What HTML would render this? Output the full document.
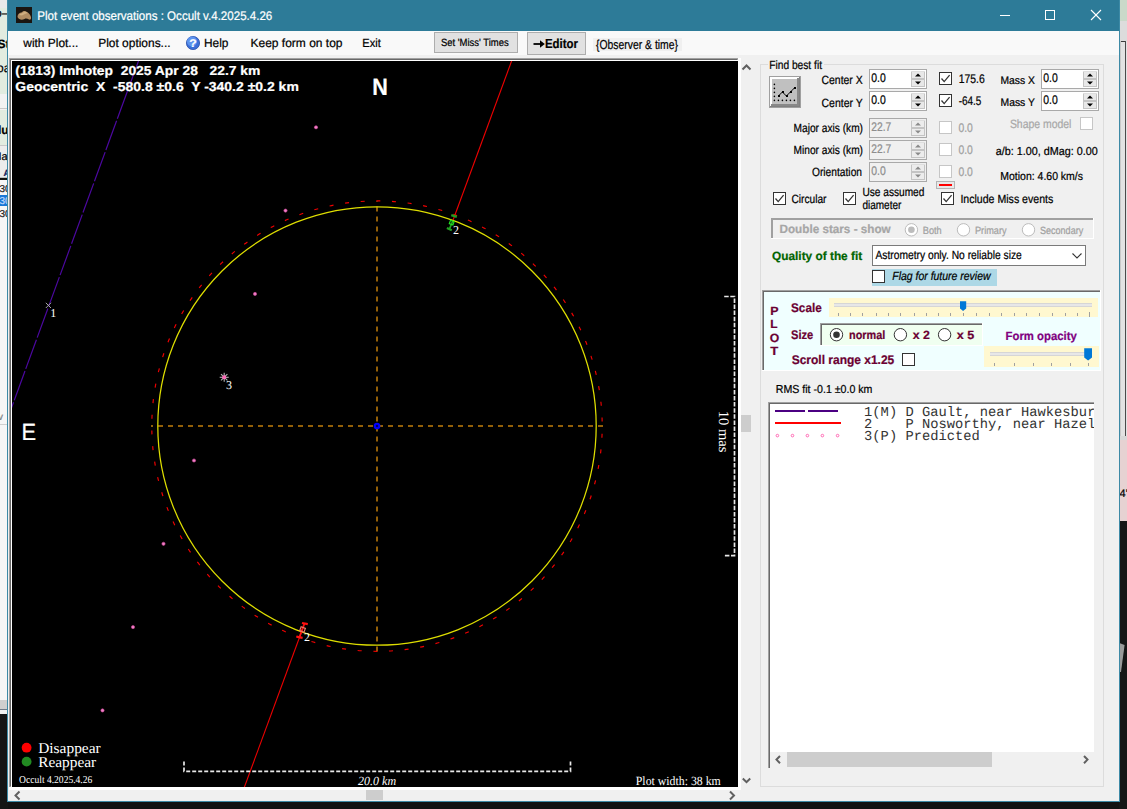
<!DOCTYPE html>
<html><head><meta charset="utf-8"><title>Plot event observations</title>
<style>
html,body{margin:0;padding:0}
body{width:1127px;height:809px;overflow:hidden;position:relative;background:#121212;font-family:"Liberation Sans",sans-serif}
.a{position:absolute}
svg text{text-rendering:geometricPrecision}
</style></head><body>
<div class="a" style="left:0px;top:0px;width:1127px;height:809px;background:#121212;"></div>
<div class="a" style="left:0px;top:0px;width:8px;height:8px;background:#e9e9e9;"></div>
<div class="a" style="left:0px;top:8px;width:8px;height:86px;background:#e2ece0;"></div>
<div class="a" style="left:0px;top:94px;width:8px;height:16px;background:#f2f2f2;"></div>
<div class="a" style="left:0px;top:108px;width:8px;height:1px;background:#c8c8c8;"></div>
<div class="a" style="left:0px;top:110px;width:8px;height:35px;background:#e2ece0;"></div>
<div class="a" style="left:0px;top:145px;width:8px;height:1px;background:#c8c8c8;"></div>
<div class="a" style="left:0px;top:146px;width:8px;height:31px;background:#ececec;"></div>
<div class="a" style="left:0px;top:177px;width:8px;height:1px;background:#c0c0c0;"></div>
<div class="a" style="left:0px;top:180px;width:8px;height:520px;background:#f6f6f6;"></div>
<div class="a" style="left:0px;top:195px;width:8px;height:11px;background:#1a78d6;"></div>
<div class="a" style="left:0px;top:424px;width:8px;height:1px;background:#d0d0d0;"></div>
<div class="a" style="left:0px;top:700px;width:8px;height:12px;background:#cfcfcf;"></div>
<div class="a" style="left:0px;top:709px;width:8px;height:1px;background:#6e7a88;"></div>
<div class="a" style="left:0px;top:710px;width:8px;height:4px;background:#f0f0f0;"></div>
<div class="a" style="left:0px;top:714px;width:8px;height:95px;background:#151515;"></div>
<div class="a" style="left:1119px;top:0px;width:8px;height:21px;background:#c9d9c9;"></div>
<div class="a" style="left:1119px;top:21px;width:8px;height:20px;background:#dcdcdc;"></div>
<div class="a" style="left:1119px;top:41px;width:8px;height:395px;background:#e2e2e2;"></div>
<div class="a" style="left:1120px;top:41px;width:6px;height:1px;background:#3c3c3c;"></div>
<div class="a" style="left:1125px;top:41px;width:1px;height:395px;background:#4a4a4a;"></div>
<div class="a" style="left:1120px;top:41px;width:1px;height:395px;background:#c8c8c8;"></div>
<div class="a" style="left:1119px;top:436px;width:8px;height:4px;background:#d8d8d8;"></div>
<div class="a" style="left:1119px;top:440px;width:8px;height:81px;background:#e6d2d2;"></div>
<div class="a" style="left:1119px;top:521px;width:8px;height:288px;background:#161616;"></div>
<div class="a" style="left:7px;top:0px;width:1113px;height:802px;background:#3d8aa6;"></div>
<div class="a" style="left:8px;top:0px;width:1111px;height:31px;background:#2d7b98;"></div>
<div class="a" style="left:8px;top:31px;width:1111px;height:770px;background:#f0f0f0;"></div>
<div class="a" style="left:8px;top:31px;width:1111px;height:24px;background:#f9f9f9;"></div>
<div class="a" style="left:9px;top:58px;width:732px;height:732px;background:#ffffff;"></div>
<div class="a" style="left:9px;top:58px;width:729px;height:2px;background:#a0a0a0;"></div>
<div class="a" style="left:9px;top:58px;width:2px;height:729px;background:#a0a0a0;"></div>
<div class="a" style="left:10px;top:59px;width:727px;height:1px;background:#696969;"></div>
<div class="a" style="left:10px;top:59px;width:1px;height:727px;background:#696969;"></div>
<div class="a" style="left:12px;top:61px;width:726px;height:726px;background:#000000;"></div>
<div class="a" style="left:741px;top:415px;width:10px;height:17px;background:#cdcdcd;"></div>
<div class="a" style="left:366px;top:790px;width:17px;height:10px;background:#cdcdcd;"></div>
<div class="a" style="left:760px;top:64px;width:344px;height:723px;border:1px solid #dcdcdc;box-sizing:border-box;"></div>
<div class="a" style="left:768px;top:60px;width:56px;height:10px;background:#f0f0f0;"></div>
<div class="a" style="left:16px;top:7px;width:16px;height:16px;background:#1a1510;"></div>
<div class="a" style="left:1000px;top:15px;width:10px;height:1px;background:#ffffff;"></div>
<div class="a" style="left:1045px;top:10px;width:10px;height:10px;border:1px solid #ffffff;box-sizing:border-box;"></div>
<div class="a" style="left:434px;top:32px;width:84px;height:21px;background:#e1e1e1;border:1px solid #adadad;box-sizing:border-box;"></div>
<div class="a" style="left:527px;top:32px;width:59px;height:23px;background:#e1e1e1;border:1px solid #adadad;box-sizing:border-box;"></div>
<div class="a" style="left:593px;top:38px;width:89px;height:13px;background:#f0f0f0;"></div>
<div class="a" style="left:769px;top:76px;width:32px;height:32px;background:#a0a0a0;"></div>
<div class="a" style="left:770px;top:77px;width:30px;height:30px;background:#808080;"></div>
<div class="a" style="left:770px;top:77px;width:29px;height:29px;background:#ffffff;"></div>
<div class="a" style="left:772px;top:79px;width:26px;height:26px;background:#c0c0c0;"></div>
<div class="a" style="left:797px;top:78px;width:2px;height:28px;background:#888888;"></div>
<div class="a" style="left:771px;top:104px;width:28px;height:2px;background:#888888;"></div>
<div class="a" style="left:777.5px;top:95.1px;width:2px;height:2px;background:#000;"></div>
<div class="a" style="left:781.5px;top:91.1px;width:2px;height:2px;background:#000;"></div>
<div class="a" style="left:785.5px;top:95.1px;width:2px;height:2px;background:#000;"></div>
<div class="a" style="left:789.5px;top:91.1px;width:2px;height:2px;background:#000;"></div>
<div class="a" style="left:793.5px;top:87.1px;width:2px;height:2px;background:#000;"></div>
<div class="a" style="left:869px;top:69px;width:58px;height:20px;background:#ffffff;border:1px solid #a9a9a9;box-sizing:border-box;"></div>
<div class="a" style="left:911px;top:71px;width:14px;height:16px;background:#e8e8e8;"></div>
<div class="a" style="left:911px;top:71px;width:1px;height:16px;background:#c4c4c4;"></div>
<div class="a" style="left:924px;top:71px;width:1px;height:16px;background:#c4c4c4;"></div>
<div class="a" style="left:911px;top:86px;width:14px;height:1px;background:#c4c4c4;"></div>
<div class="a" style="left:911px;top:71px;width:14px;height:1px;background:#dedede;"></div>
<div class="a" style="left:911px;top:78px;width:14px;height:2px;background:#c4c4c4;"></div>
<div class="a" style="left:869px;top:91px;width:58px;height:20px;background:#ffffff;border:1px solid #a9a9a9;box-sizing:border-box;"></div>
<div class="a" style="left:911px;top:93px;width:14px;height:16px;background:#e8e8e8;"></div>
<div class="a" style="left:911px;top:93px;width:1px;height:16px;background:#c4c4c4;"></div>
<div class="a" style="left:924px;top:93px;width:1px;height:16px;background:#c4c4c4;"></div>
<div class="a" style="left:911px;top:108px;width:14px;height:1px;background:#c4c4c4;"></div>
<div class="a" style="left:911px;top:93px;width:14px;height:1px;background:#dedede;"></div>
<div class="a" style="left:911px;top:100px;width:14px;height:2px;background:#c4c4c4;"></div>
<div class="a" style="left:939px;top:72px;width:13px;height:13px;background:#ffffff;border:1px solid #333333;box-sizing:border-box;"></div>
<div class="a" style="left:939px;top:94px;width:13px;height:13px;background:#ffffff;border:1px solid #333333;box-sizing:border-box;"></div>
<div class="a" style="left:1041px;top:69px;width:58px;height:20px;background:#ffffff;border:1px solid #a9a9a9;box-sizing:border-box;"></div>
<div class="a" style="left:1083px;top:71px;width:14px;height:16px;background:#e8e8e8;"></div>
<div class="a" style="left:1083px;top:71px;width:1px;height:16px;background:#c4c4c4;"></div>
<div class="a" style="left:1096px;top:71px;width:1px;height:16px;background:#c4c4c4;"></div>
<div class="a" style="left:1083px;top:86px;width:14px;height:1px;background:#c4c4c4;"></div>
<div class="a" style="left:1083px;top:71px;width:14px;height:1px;background:#dedede;"></div>
<div class="a" style="left:1083px;top:78px;width:14px;height:2px;background:#c4c4c4;"></div>
<div class="a" style="left:1041px;top:91px;width:58px;height:20px;background:#ffffff;border:1px solid #a9a9a9;box-sizing:border-box;"></div>
<div class="a" style="left:1083px;top:93px;width:14px;height:16px;background:#e8e8e8;"></div>
<div class="a" style="left:1083px;top:93px;width:1px;height:16px;background:#c4c4c4;"></div>
<div class="a" style="left:1096px;top:93px;width:1px;height:16px;background:#c4c4c4;"></div>
<div class="a" style="left:1083px;top:108px;width:14px;height:1px;background:#c4c4c4;"></div>
<div class="a" style="left:1083px;top:93px;width:14px;height:1px;background:#dedede;"></div>
<div class="a" style="left:1083px;top:100px;width:14px;height:2px;background:#c4c4c4;"></div>
<div class="a" style="left:869px;top:118px;width:58px;height:20px;background:#f0f0f0;border:1px solid #a9a9a9;box-sizing:border-box;"></div>
<div class="a" style="left:911px;top:120px;width:14px;height:16px;background:#ececec;"></div>
<div class="a" style="left:911px;top:120px;width:1px;height:16px;background:#c4c4c4;"></div>
<div class="a" style="left:924px;top:120px;width:1px;height:16px;background:#c4c4c4;"></div>
<div class="a" style="left:911px;top:135px;width:14px;height:1px;background:#c4c4c4;"></div>
<div class="a" style="left:911px;top:120px;width:14px;height:1px;background:#dedede;"></div>
<div class="a" style="left:911px;top:127px;width:14px;height:2px;background:#c4c4c4;"></div>
<div class="a" style="left:869px;top:140px;width:58px;height:20px;background:#f0f0f0;border:1px solid #a9a9a9;box-sizing:border-box;"></div>
<div class="a" style="left:911px;top:142px;width:14px;height:16px;background:#ececec;"></div>
<div class="a" style="left:911px;top:142px;width:1px;height:16px;background:#c4c4c4;"></div>
<div class="a" style="left:924px;top:142px;width:1px;height:16px;background:#c4c4c4;"></div>
<div class="a" style="left:911px;top:157px;width:14px;height:1px;background:#c4c4c4;"></div>
<div class="a" style="left:911px;top:142px;width:14px;height:1px;background:#dedede;"></div>
<div class="a" style="left:911px;top:149px;width:14px;height:2px;background:#c4c4c4;"></div>
<div class="a" style="left:869px;top:162px;width:58px;height:20px;background:#f0f0f0;border:1px solid #a9a9a9;box-sizing:border-box;"></div>
<div class="a" style="left:911px;top:164px;width:14px;height:16px;background:#ececec;"></div>
<div class="a" style="left:911px;top:164px;width:1px;height:16px;background:#c4c4c4;"></div>
<div class="a" style="left:924px;top:164px;width:1px;height:16px;background:#c4c4c4;"></div>
<div class="a" style="left:911px;top:179px;width:14px;height:1px;background:#c4c4c4;"></div>
<div class="a" style="left:911px;top:164px;width:14px;height:1px;background:#dedede;"></div>
<div class="a" style="left:911px;top:171px;width:14px;height:2px;background:#c4c4c4;"></div>
<div class="a" style="left:939px;top:121px;width:13px;height:13px;background:#ffffff;border:1px solid #c6c6c6;box-sizing:border-box;"></div>
<div class="a" style="left:939px;top:143px;width:13px;height:13px;background:#ffffff;border:1px solid #c6c6c6;box-sizing:border-box;"></div>
<div class="a" style="left:939px;top:165px;width:13px;height:13px;background:#ffffff;border:1px solid #c6c6c6;box-sizing:border-box;"></div>
<div class="a" style="left:936px;top:181px;width:19px;height:8px;background:#e8e8e8;border:1px solid #b4b4b4;box-sizing:border-box;"></div>
<div class="a" style="left:939px;top:184px;width:13px;height:2px;background:#ff0000;"></div>
<div class="a" style="left:1080px;top:117px;width:13px;height:13px;background:#ffffff;border:1px solid #c6c6c6;box-sizing:border-box;"></div>
<div class="a" style="left:773px;top:192px;width:13px;height:13px;background:#ffffff;border:1px solid #333333;box-sizing:border-box;"></div>
<div class="a" style="left:843px;top:192px;width:13px;height:13px;background:#ffffff;border:1px solid #333333;box-sizing:border-box;"></div>
<div class="a" style="left:941px;top:192px;width:13px;height:13px;background:#ffffff;border:1px solid #333333;box-sizing:border-box;"></div>
<div class="a" style="left:771px;top:218px;width:323px;height:21px;background:#f0f0f0;"></div>
<div class="a" style="left:771px;top:218px;width:323px;height:2px;background:#a0a0a0;"></div>
<div class="a" style="left:771px;top:218px;width:2px;height:21px;background:#a0a0a0;"></div>
<div class="a" style="left:771px;top:238px;width:323px;height:1px;background:#ffffff;"></div>
<div class="a" style="left:1093px;top:218px;width:1px;height:21px;background:#ffffff;"></div>
<div class="a" style="left:872px;top:245px;width:214px;height:21px;background:#ffffff;border:1px solid #7a7a7a;box-sizing:border-box;"></div>
<div class="a" style="left:872px;top:269px;width:125px;height:17px;background:#add8e6;"></div>
<div class="a" style="left:872px;top:270px;width:13px;height:13px;background:#ffffff;border:1px solid #333333;box-sizing:border-box;"></div>
<div class="a" style="left:762px;top:290px;width:339px;height:81px;background:#f0ffff;"></div>
<div class="a" style="left:762px;top:290px;width:339px;height:2px;background:#a0a0a0;"></div>
<div class="a" style="left:762px;top:290px;width:2px;height:81px;background:#a0a0a0;"></div>
<div class="a" style="left:763px;top:291px;width:337px;height:1px;background:#696969;"></div>
<div class="a" style="left:763px;top:291px;width:1px;height:79px;background:#696969;"></div>
<div class="a" style="left:762px;top:370px;width:339px;height:1px;background:#ffffff;"></div>
<div class="a" style="left:1100px;top:290px;width:1px;height:81px;background:#ffffff;"></div>
<div class="a" style="left:829px;top:298px;width:269px;height:19px;background:#fff8d0;"></div>
<div class="a" style="left:834px;top:303px;width:258px;height:4px;background:#e7e7e7;"></div>
<div class="a" style="left:834px;top:303px;width:258px;height:1px;background:#d6d6d6;"></div>
<div class="a" style="left:834px;top:306px;width:258px;height:1px;background:#d6d6d6;"></div>
<div class="a" style="left:838px;top:313px;width:1px;height:3px;background:#a0a0a0;"></div>
<div class="a" style="left:850px;top:313px;width:1px;height:3px;background:#a0a0a0;"></div>
<div class="a" style="left:862px;top:313px;width:1px;height:3px;background:#a0a0a0;"></div>
<div class="a" style="left:876px;top:313px;width:1px;height:3px;background:#a0a0a0;"></div>
<div class="a" style="left:888px;top:313px;width:1px;height:3px;background:#a0a0a0;"></div>
<div class="a" style="left:900px;top:313px;width:1px;height:3px;background:#a0a0a0;"></div>
<div class="a" style="left:914px;top:313px;width:1px;height:3px;background:#a0a0a0;"></div>
<div class="a" style="left:926px;top:313px;width:1px;height:3px;background:#a0a0a0;"></div>
<div class="a" style="left:938px;top:313px;width:1px;height:3px;background:#a0a0a0;"></div>
<div class="a" style="left:950px;top:313px;width:1px;height:3px;background:#a0a0a0;"></div>
<div class="a" style="left:963px;top:313px;width:1px;height:3px;background:#a0a0a0;"></div>
<div class="a" style="left:976px;top:313px;width:1px;height:3px;background:#a0a0a0;"></div>
<div class="a" style="left:989px;top:313px;width:1px;height:3px;background:#a0a0a0;"></div>
<div class="a" style="left:1001px;top:313px;width:1px;height:3px;background:#a0a0a0;"></div>
<div class="a" style="left:1014px;top:313px;width:1px;height:3px;background:#a0a0a0;"></div>
<div class="a" style="left:1026px;top:313px;width:1px;height:3px;background:#a0a0a0;"></div>
<div class="a" style="left:1039px;top:313px;width:1px;height:3px;background:#a0a0a0;"></div>
<div class="a" style="left:1052px;top:313px;width:1px;height:3px;background:#a0a0a0;"></div>
<div class="a" style="left:1065px;top:313px;width:1px;height:3px;background:#a0a0a0;"></div>
<div class="a" style="left:1077px;top:313px;width:1px;height:3px;background:#a0a0a0;"></div>
<div class="a" style="left:1089px;top:313px;width:1px;height:3px;background:#a0a0a0;"></div>
<div class="a" style="left:1089px;top:312px;width:1px;height:5px;background:#a0a0a0;"></div>
<div class="a" style="left:820px;top:323px;width:163px;height:23px;background:#f0fff0;"></div>
<div class="a" style="left:820px;top:323px;width:163px;height:2px;background:#a0a0a0;"></div>
<div class="a" style="left:820px;top:323px;width:2px;height:23px;background:#a0a0a0;"></div>
<div class="a" style="left:821px;top:324px;width:161px;height:1px;background:#696969;"></div>
<div class="a" style="left:821px;top:324px;width:1px;height:21px;background:#696969;"></div>
<div class="a" style="left:820px;top:345px;width:163px;height:1px;background:#ffffff;"></div>
<div class="a" style="left:982px;top:323px;width:1px;height:23px;background:#ffffff;"></div>
<div class="a" style="left:984px;top:346px;width:115px;height:21px;background:#fff8d0;"></div>
<div class="a" style="left:990px;top:352px;width:102px;height:4px;background:#e7e7e7;"></div>
<div class="a" style="left:990px;top:352px;width:102px;height:1px;background:#d6d6d6;"></div>
<div class="a" style="left:990px;top:355px;width:102px;height:1px;background:#d6d6d6;"></div>
<div class="a" style="left:994px;top:363px;width:1px;height:3px;background:#a0a0a0;"></div>
<div class="a" style="left:1014px;top:363px;width:1px;height:3px;background:#a0a0a0;"></div>
<div class="a" style="left:1033px;top:363px;width:1px;height:3px;background:#a0a0a0;"></div>
<div class="a" style="left:1051px;top:363px;width:1px;height:3px;background:#a0a0a0;"></div>
<div class="a" style="left:1070px;top:363px;width:1px;height:3px;background:#a0a0a0;"></div>
<div class="a" style="left:1088px;top:363px;width:1px;height:3px;background:#a0a0a0;"></div>
<div class="a" style="left:902px;top:353px;width:13px;height:13px;background:#ffffff;border:1px solid #333333;box-sizing:border-box;"></div>
<div class="a" style="left:768px;top:402px;width:327px;height:367px;background:#ffffff;"></div>
<div class="a" style="left:768px;top:402px;width:327px;height:2px;background:#a0a0a0;"></div>
<div class="a" style="left:768px;top:402px;width:2px;height:367px;background:#a0a0a0;"></div>
<div class="a" style="left:769px;top:403px;width:325px;height:1px;background:#696969;"></div>
<div class="a" style="left:769px;top:403px;width:1px;height:365px;background:#696969;"></div>
<div class="a" style="left:1094px;top:402px;width:1px;height:367px;background:#f0f0f0;"></div>
<div class="a" style="left:768px;top:768px;width:327px;height:1px;background:#f0f0f0;"></div>
<div class="a" style="left:770px;top:752px;width:324px;height:16px;background:#f0f0f0;"></div>
<div class="a" style="left:787px;top:752px;width:205px;height:15px;background:#cdcdcd;"></div>
<div class="a" style="left:775px;top:410px;width:30px;height:2px;background:#4b0082;"></div>
<div class="a" style="left:808px;top:410px;width:30px;height:2px;background:#4b0082;"></div>
<div class="a" style="left:775px;top:422px;width:66px;height:2px;background:#ff0000;"></div>
<svg class="a" style="left:0;top:0" width="1127" height="809">
<path d="M17.5,17 C17.5,14 19.5,12.8 21.5,12.6 C22.5,11 24.5,10.4 26,11.4 C28,12 30.2,14 31,17 C31.3,19 30.5,20.2 29,19.6 C27.5,18.6 26,18.2 24.5,18.9 C22.5,20.2 19,20.2 17.5,17 Z" fill="#b08c62"/><path d="M19,15 C20,13.5 22,13.2 23.5,12.2 C25,11.5 26.5,12 27.5,13 C26,13.5 24,14.5 22,15.5 Z" fill="#cfae80"/>
<text x="37.3" y="20" textLength="235" lengthAdjust="spacingAndGlyphs" style="font-family:'Liberation Sans';font-size:12.5px;font-weight:normal;font-style:normal;fill:#ffffff;stroke:#ffffff;stroke-width:0.22px;white-space:pre" >Plot event observations : Occult v.4.2025.4.26</text>
<line x1="1091" y1="10" x2="1101" y2="20" stroke="#ffffff" stroke-width="1.1" />
<line x1="1101" y1="10" x2="1091" y2="20" stroke="#ffffff" stroke-width="1.1" />
<text x="23.3" y="47" textLength="55" lengthAdjust="spacingAndGlyphs" style="font-family:'Liberation Sans';font-size:12px;font-weight:normal;font-style:normal;fill:#000;stroke:#000;stroke-width:0.22px;white-space:pre" >with Plot...</text>
<text x="98.2" y="47" textLength="72.4" lengthAdjust="spacingAndGlyphs" style="font-family:'Liberation Sans';font-size:12px;font-weight:normal;font-style:normal;fill:#000;stroke:#000;stroke-width:0.22px;white-space:pre" >Plot options...</text>
<circle cx="193" cy="43" r="6.6" fill="#3a6fd8" stroke="#2a4fa8" stroke-width="0.8"/>
<circle cx="192" cy="41.5" r="5" fill="#5d93ee"/>
<text x="189.3" y="47.3" textLength="7.5" lengthAdjust="spacingAndGlyphs" style="font-family:'Liberation Sans';font-size:11px;font-weight:bold;font-style:normal;fill:#ffffff;stroke:#ffffff;stroke-width:0.22px;white-space:pre" >?</text>
<text x="204" y="47" textLength="24.4" lengthAdjust="spacingAndGlyphs" style="font-family:'Liberation Sans';font-size:12px;font-weight:normal;font-style:normal;fill:#000;stroke:#000;stroke-width:0.22px;white-space:pre" >Help</text>
<text x="250.5" y="47" textLength="92" lengthAdjust="spacingAndGlyphs" style="font-family:'Liberation Sans';font-size:12px;font-weight:normal;font-style:normal;fill:#000;stroke:#000;stroke-width:0.22px;white-space:pre" >Keep form on top</text>
<text x="362.3" y="47" textLength="18.5" lengthAdjust="spacingAndGlyphs" style="font-family:'Liberation Sans';font-size:12px;font-weight:normal;font-style:normal;fill:#000;stroke:#000;stroke-width:0.22px;white-space:pre" >Exit</text>
<text x="440.9" y="46.3" textLength="67.8" lengthAdjust="spacingAndGlyphs" style="font-family:'Liberation Sans';font-size:10.5px;font-weight:normal;font-style:normal;fill:#000;stroke:#000;stroke-width:0.22px;white-space:pre" >Set &#x27;Miss&#x27; Times</text>
<path d="M533.5,44 H543" stroke="#000" stroke-width="1.8"/><path d="M540,40.3 L544.8,44 L540,47.7 Z" fill="#000"/>
<text x="545" y="48" textLength="33" lengthAdjust="spacingAndGlyphs" style="font-family:'Liberation Sans';font-size:13px;font-weight:bold;font-style:normal;fill:#000;stroke:#000;stroke-width:0.22px;white-space:pre" >Editor</text>
<text x="596" y="49" textLength="82" lengthAdjust="spacingAndGlyphs" style="font-family:'Liberation Sans';font-size:13px;font-weight:normal;font-style:normal;fill:#000;stroke:#000;stroke-width:0.22px;white-space:pre" >{Observer &amp; time}</text>
<defs><clipPath id="lclip"><rect x="0" y="0" width="7" height="809"/></clipPath><clipPath id="rclip"><rect x="1120" y="0" width="7" height="809"/></clipPath></defs>
<g clip-path="url(#lclip)">
<text x="-5" y="17" style="font-family:'Liberation Sans';font-size:12px;font-weight:normal;font-style:normal;fill:#000;stroke:#000;stroke-width:0.22px;white-space:pre" >o–</text>
<text x="-2.5" y="47.5" style="font-family:'Liberation Sans';font-size:12px;font-weight:bold;font-style:normal;fill:#000;stroke:#000;stroke-width:0.22px;white-space:pre" >St</text>
<text x="-3" y="71.5" style="font-family:'Liberation Sans';font-size:12px;font-weight:normal;font-style:normal;fill:#000;stroke:#000;stroke-width:0.22px;white-space:pre" >oa</text>
<text x="-2" y="134" style="font-family:'Liberation Sans';font-size:12px;font-weight:bold;font-style:normal;fill:#000;stroke:#000;stroke-width:0.22px;white-space:pre" >lu</text>
<text x="-7.7" y="160" style="font-family:'Liberation Sans';font-size:11px;font-weight:normal;font-style:normal;fill:#000;stroke:#000;stroke-width:0.22px;white-space:pre" >Ma</text>
<text x="3.5" y="176" style="font-family:'Liberation Sans';font-size:9px;font-weight:bold;font-style:normal;fill:#102060;stroke:#102060;stroke-width:0.22px;white-space:pre" >A</text>
<text x="-0.5" y="191.7" style="font-family:'Liberation Sans';font-size:10px;font-weight:normal;font-style:normal;fill:#202020;stroke:#202020;stroke-width:0.22px;white-space:pre" >30</text>
<text x="-0.5" y="204" style="font-family:'Liberation Sans';font-size:10px;font-weight:normal;font-style:normal;fill:#c0d8ff;stroke:#c0d8ff;stroke-width:0.22px;white-space:pre" >30</text>
<text x="-0.5" y="216.7" style="font-family:'Liberation Sans';font-size:10px;font-weight:normal;font-style:normal;fill:#202020;stroke:#202020;stroke-width:0.22px;white-space:pre" >30</text>
<text x="-2" y="420" style="font-family:'Liberation Sans';font-size:10px;font-weight:normal;font-style:normal;fill:#808080;stroke:#808080;stroke-width:0.22px;white-space:pre" >v</text>
</g>
<g clip-path="url(#rclip)">
<text x="1119.5" y="497" style="font-family:'Liberation Sans';font-size:11px;font-weight:normal;font-style:normal;fill:#000;stroke:#000;stroke-width:0.22px;white-space:pre" >4’</text>
<path d="M1119.5,643 L1124.6,645 L1121,672 L1119.5,672 Z" fill="#9a9a9a"/>
</g>
<g clip-path="url(#plotclip)">
<defs><clipPath id="plotclip"><rect x="12" y="61" width="726" height="726"/></clipPath></defs>
<line x1="138.5" y1="61" x2="7.03" y2="420" stroke="#4c08a0" stroke-width="1.2" stroke-dasharray="31.1 2.2" stroke-dashoffset="2.9"/>
<line x1="513.808" y1="55" x2="452.72" y2="221" stroke="#ee0000" stroke-width="1.1" />
<line x1="302.944" y1="628" x2="243.32800000000003" y2="790" stroke="#ee0000" stroke-width="1.1" />
<line x1="151" y1="426" x2="603" y2="426" stroke="#925f08" stroke-width="2" stroke-dasharray="5 5" stroke-dashoffset="-7"/>
<line x1="377" y1="201" x2="377" y2="652" stroke="#925f08" stroke-width="2" stroke-dasharray="5 5" stroke-dashoffset="-5.6"/>
<circle cx="377" cy="426.1" r="225.2" fill="none" stroke="#f00000" stroke-width="1.15" stroke-dasharray="4 11.708" stroke-dashoffset="-7.7"/>
<circle cx="377" cy="426" r="219.2" fill="none" stroke="#dede00" stroke-width="1.25"/>
<circle cx="377" cy="426" r="2.3" fill="#000060" stroke="#0000ff" stroke-width="2.1"/>
<circle cx="316.0" cy="127.3" r="1.6" fill="#f080c8" stroke="#d04898" stroke-width="0.6"/>
<circle cx="285.5" cy="210.6" r="1.6" fill="#f080c8" stroke="#d04898" stroke-width="0.6"/>
<circle cx="255.0" cy="293.9" r="1.6" fill="#f080c8" stroke="#d04898" stroke-width="0.6"/>
<circle cx="194.0" cy="460.5" r="1.6" fill="#f080c8" stroke="#d04898" stroke-width="0.6"/>
<circle cx="163.5" cy="543.8" r="1.6" fill="#f080c8" stroke="#d04898" stroke-width="0.6"/>
<circle cx="133.0" cy="627.1" r="1.6" fill="#f080c8" stroke="#d04898" stroke-width="0.6"/>
<circle cx="102.5" cy="710.4" r="1.6" fill="#f080c8" stroke="#d04898" stroke-width="0.6"/>
<line x1="219.7" y1="377.3" x2="228.7" y2="377.3" stroke="#b4b4b4" stroke-width="1.1" />
<line x1="221.01801948466053" y1="374.1180194846605" x2="227.38198051533945" y2="380.4819805153395" stroke="#b4b4b4" stroke-width="1.1" />
<line x1="224.2" y1="372.8" x2="224.2" y2="381.8" stroke="#b4b4b4" stroke-width="1.1" />
<line x1="227.38198051533945" y1="374.1180194846605" x2="221.01801948466053" y2="380.4819805153395" stroke="#b4b4b4" stroke-width="1.1" />
<circle cx="224.2" cy="377.3" r="2" fill="#ff6ab8"/>
<line x1="45.8" y1="302.79999999999995" x2="51.0" y2="308.0" stroke="#a8a8a8" stroke-width="1" />
<line x1="45.8" y1="308.0" x2="51.0" y2="302.79999999999995" stroke="#a8a8a8" stroke-width="1" />
<line x1="451.3" y1="215.1" x2="456.8" y2="216.9" stroke="#22a022" stroke-width="2.2" />
<line x1="446.9" y1="228" x2="451.8" y2="230.2" stroke="#22a022" stroke-width="2.2" />
<line x1="452.8" y1="221" x2="449.4" y2="229" stroke="#22a022" stroke-width="1.8" />
<rect x="449.8" y="220.8" width="3.8" height="3.6" fill="none" stroke="#20e020" stroke-width="1.2" transform="rotate(20 451.7 222.6)"/>
<line x1="302" y1="623" x2="307.8" y2="624.2" stroke="#ff1010" stroke-width="2.2" />
<line x1="296.4" y1="636.6" x2="302.6" y2="637.8" stroke="#ff1010" stroke-width="2.2" />
<line x1="304.5" y1="623.5" x2="299.5" y2="637" stroke="#ff1010" stroke-width="1.8" />
<rect x="300.3" y="627.4" width="4.5" height="4.2" fill="none" stroke="#f07868" stroke-width="1.2" transform="rotate(20 302.5 629.5)"/>
</g>
<path d="M184,761.5 V771.3 H570.5 V761.5" fill="none" stroke="#e8e8e8" stroke-width="1.7" stroke-dasharray="4 2"/>
<path d="M724.2,296.5 H734.5 V555.6 H724.2" fill="none" stroke="#e8e8e8" stroke-width="1.7" stroke-dasharray="4.5 1.6"/>
<text x="15.3" y="74.5" textLength="245" lengthAdjust="spacingAndGlyphs" style="font-family:'Liberation Sans';font-size:13px;font-weight:bold;font-style:normal;fill:#ffffff;stroke:#ffffff;stroke-width:0.22px;white-space:pre" >(1813) Imhotep  2025 Apr 28   22.7 km</text>
<text x="15.3" y="90.6" textLength="283.5" lengthAdjust="spacingAndGlyphs" style="font-family:'Liberation Sans';font-size:13px;font-weight:bold;font-style:normal;fill:#ffffff;stroke:#ffffff;stroke-width:0.22px;white-space:pre" >Geocentric  X  -580.8 ±0.6  Y -340.2 ±0.2 km</text>
<text x="372.3" y="95" textLength="15.6" lengthAdjust="spacingAndGlyphs" style="font-family:'Liberation Sans';font-size:23.5px;font-weight:bold;font-style:normal;fill:#ffffff;stroke:#ffffff;stroke-width:0.22px;white-space:pre" >N</text>
<text x="21.4" y="440" textLength="14.6" lengthAdjust="spacingAndGlyphs" style="font-family:'Liberation Sans';font-size:23.5px;font-weight:normal;font-style:normal;fill:#ffffff;stroke:#ffffff;stroke-width:0.22px;white-space:pre" >E</text>
<text x="50.2" y="317" style="font-family:'Liberation Serif';font-size:12px;font-weight:normal;font-style:normal;fill:#ffffff;white-space:pre" >1</text>
<text x="453" y="233.7" style="font-family:'Liberation Serif';font-size:12px;font-weight:normal;font-style:normal;fill:#ffffff;white-space:pre" >2</text>
<text x="304" y="641" style="font-family:'Liberation Serif';font-size:12px;font-weight:normal;font-style:normal;fill:#ffffff;white-space:pre" >2</text>
<text x="226" y="389" style="font-family:'Liberation Serif';font-size:12px;font-weight:normal;font-style:normal;fill:#ffffff;white-space:pre" >3</text>
<circle cx="26.6" cy="747.7" r="4.9" fill="#ff0000"/>
<circle cx="26.6" cy="761.6" r="4.9" fill="#228b22"/>
<text x="38.2" y="752.7" textLength="62.5" lengthAdjust="spacingAndGlyphs" style="font-family:'Liberation Serif';font-size:15px;font-weight:normal;font-style:normal;fill:#ffffff;white-space:pre" >Disappear</text>
<text x="38.2" y="766.7" textLength="58" lengthAdjust="spacingAndGlyphs" style="font-family:'Liberation Serif';font-size:15px;font-weight:normal;font-style:normal;fill:#ffffff;white-space:pre" >Reappear</text>
<text x="19.1" y="783" textLength="73.2" lengthAdjust="spacingAndGlyphs" style="font-family:'Liberation Serif';font-size:10.5px;font-weight:normal;font-style:normal;fill:#ffffff;white-space:pre" >Occult 4.2025.4.26</text>
<text x="358.1" y="785" textLength="38" lengthAdjust="spacingAndGlyphs" style="font-family:'Liberation Serif';font-size:12.5px;font-weight:normal;font-style:italic;fill:#ffffff;white-space:pre" >20.0 km</text>
<text x="635.8" y="785" textLength="85" lengthAdjust="spacingAndGlyphs" style="font-family:'Liberation Serif';font-size:12.5px;font-weight:normal;font-style:normal;fill:#ffffff;white-space:pre" >Plot width: 38 km</text>
<g transform="translate(718.5,410.8) rotate(90)">
<text x="0" y="0" textLength="41.5" lengthAdjust="spacingAndGlyphs" style="font-family:'Liberation Serif';font-size:14.5px;font-weight:normal;font-style:normal;fill:#ffffff;white-space:pre" >10 mas</text>
</g>
<path d="M742.5,69.5 L746.5,65.5 L750.5,69.5" fill="none" stroke="#606060" stroke-width="2"/>
<path d="M742.8,778.5 L746.5,782.2 L750.2,778.5" fill="none" stroke="#606060" stroke-width="2"/>
<path d="M19.5,791.5 L15.5,795.5 L19.5,799.5" fill="none" stroke="#606060" stroke-width="2"/>
<path d="M730,791.5 L734,795.5 L730,799.5" fill="none" stroke="#606060" stroke-width="2"/>
<text x="769.2" y="69.2" textLength="52.8" lengthAdjust="spacingAndGlyphs" style="font-family:'Liberation Sans';font-size:12px;font-weight:normal;font-style:normal;fill:#000;stroke:#000;stroke-width:0.22px;white-space:pre" >Find best fit</text>
<circle cx="774.4" cy="84.4" r="0.8" fill="#000"/>
<circle cx="774.4" cy="88.4" r="0.8" fill="#000"/>
<circle cx="774.4" cy="92.4" r="0.8" fill="#000"/>
<circle cx="774.4" cy="96.4" r="0.8" fill="#000"/>
<circle cx="774.4" cy="100.4" r="0.8" fill="#000"/>
<circle cx="778.4" cy="100.4" r="0.8" fill="#000"/>
<circle cx="782.4" cy="100.4" r="0.8" fill="#000"/>
<circle cx="786.4" cy="100.4" r="0.8" fill="#000"/>
<circle cx="790.4" cy="100.4" r="0.8" fill="#000"/>
<circle cx="794.4" cy="100.4" r="0.8" fill="#000"/>
<polyline points="778.4,96 782.4,92 786.4,96 790.4,92 794.4,88" fill="none" stroke="#000" stroke-width="1"/>
<text x="821.5" y="84.3" textLength="41.2" lengthAdjust="spacingAndGlyphs" style="font-family:'Liberation Sans';font-size:12px;font-weight:normal;font-style:normal;fill:#000;stroke:#000;stroke-width:0.22px;white-space:pre" >Center X</text>
<text x="821.5" y="106.5" textLength="41.2" lengthAdjust="spacingAndGlyphs" style="font-family:'Liberation Sans';font-size:12px;font-weight:normal;font-style:normal;fill:#000;stroke:#000;stroke-width:0.22px;white-space:pre" >Center Y</text>
<path d="M915,76.4 L918,73.4 L921,76.4 Z" fill="#000"/>
<path d="M915,81.4 L918,84.4 L921,81.4 Z" fill="#000"/>
<text x="871.3" y="82" textLength="14.5" lengthAdjust="spacingAndGlyphs" style="font-family:'Liberation Sans';font-size:12.5px;font-weight:normal;font-style:normal;fill:#000;stroke:#000;stroke-width:0.22px;white-space:pre" >0.0</text>
<path d="M915,98.4 L918,95.4 L921,98.4 Z" fill="#000"/>
<path d="M915,103.4 L918,106.4 L921,103.4 Z" fill="#000"/>
<text x="871.3" y="104.3" textLength="14.5" lengthAdjust="spacingAndGlyphs" style="font-family:'Liberation Sans';font-size:12.5px;font-weight:normal;font-style:normal;fill:#000;stroke:#000;stroke-width:0.22px;white-space:pre" >0.0</text>
<path d="M941.5,78.5 L944.2,81.6 L949.6,75.2" fill="none" stroke="#333" stroke-width="1.3"/>
<path d="M941.5,100.5 L944.2,103.6 L949.6,97.2" fill="none" stroke="#333" stroke-width="1.3"/>
<text x="958.7" y="82.8" textLength="26.1" lengthAdjust="spacingAndGlyphs" style="font-family:'Liberation Sans';font-size:12.5px;font-weight:normal;font-style:normal;fill:#000;stroke:#000;stroke-width:0.22px;white-space:pre" >175.6</text>
<text x="958.7" y="105" textLength="22.7" lengthAdjust="spacingAndGlyphs" style="font-family:'Liberation Sans';font-size:12.5px;font-weight:normal;font-style:normal;fill:#000;stroke:#000;stroke-width:0.22px;white-space:pre" >-64.5</text>
<text x="1000.5" y="84" textLength="34.4" lengthAdjust="spacingAndGlyphs" style="font-family:'Liberation Sans';font-size:11px;font-weight:normal;font-style:normal;fill:#000;stroke:#000;stroke-width:0.22px;white-space:pre" >Mass X</text>
<text x="1000.5" y="106" textLength="34.4" lengthAdjust="spacingAndGlyphs" style="font-family:'Liberation Sans';font-size:11px;font-weight:normal;font-style:normal;fill:#000;stroke:#000;stroke-width:0.22px;white-space:pre" >Mass Y</text>
<path d="M1087,76.4 L1090,73.4 L1093,76.4 Z" fill="#000"/>
<path d="M1087,81.4 L1090,84.4 L1093,81.4 Z" fill="#000"/>
<text x="1043.3" y="82.3" textLength="14.5" lengthAdjust="spacingAndGlyphs" style="font-family:'Liberation Sans';font-size:12.5px;font-weight:normal;font-style:normal;fill:#000;stroke:#000;stroke-width:0.22px;white-space:pre" >0.0</text>
<path d="M1087,98.4 L1090,95.4 L1093,98.4 Z" fill="#000"/>
<path d="M1087,103.4 L1090,106.4 L1093,103.4 Z" fill="#000"/>
<text x="1043.3" y="104.3" textLength="14.5" lengthAdjust="spacingAndGlyphs" style="font-family:'Liberation Sans';font-size:12.5px;font-weight:normal;font-style:normal;fill:#000;stroke:#000;stroke-width:0.22px;white-space:pre" >0.0</text>
<text x="793.5" y="132.3" textLength="69.5" lengthAdjust="spacingAndGlyphs" style="font-family:'Liberation Sans';font-size:12px;font-weight:normal;font-style:normal;fill:#000;stroke:#000;stroke-width:0.22px;white-space:pre" >Major axis (km)</text>
<text x="793.5" y="154.3" textLength="69.5" lengthAdjust="spacingAndGlyphs" style="font-family:'Liberation Sans';font-size:12px;font-weight:normal;font-style:normal;fill:#000;stroke:#000;stroke-width:0.22px;white-space:pre" >Minor axis (km)</text>
<text x="812" y="176.3" textLength="50" lengthAdjust="spacingAndGlyphs" style="font-family:'Liberation Sans';font-size:12px;font-weight:normal;font-style:normal;fill:#000;stroke:#000;stroke-width:0.22px;white-space:pre" >Orientation</text>
<path d="M915,125.4 L918,122.4 L921,125.4 Z" fill="#8a8a8a"/>
<path d="M915,130.4 L918,133.4 L921,130.4 Z" fill="#8a8a8a"/>
<text x="871.3" y="131" textLength="20" lengthAdjust="spacingAndGlyphs" style="font-family:'Liberation Sans';font-size:12.5px;font-weight:normal;font-style:normal;fill:#8d8d8d;stroke:#8d8d8d;stroke-width:0.22px;white-space:pre" >22.7</text>
<path d="M915,147.4 L918,144.4 L921,147.4 Z" fill="#8a8a8a"/>
<path d="M915,152.4 L918,155.4 L921,152.4 Z" fill="#8a8a8a"/>
<text x="871.3" y="153" textLength="20" lengthAdjust="spacingAndGlyphs" style="font-family:'Liberation Sans';font-size:12.5px;font-weight:normal;font-style:normal;fill:#8d8d8d;stroke:#8d8d8d;stroke-width:0.22px;white-space:pre" >22.7</text>
<path d="M915,169.4 L918,166.4 L921,169.4 Z" fill="#8a8a8a"/>
<path d="M915,174.4 L918,177.4 L921,174.4 Z" fill="#8a8a8a"/>
<text x="871.3" y="175" textLength="14.5" lengthAdjust="spacingAndGlyphs" style="font-family:'Liberation Sans';font-size:12.5px;font-weight:normal;font-style:normal;fill:#8d8d8d;stroke:#8d8d8d;stroke-width:0.22px;white-space:pre" >0.0</text>
<text x="958.4" y="132" textLength="14.4" lengthAdjust="spacingAndGlyphs" style="font-family:'Liberation Sans';font-size:12.5px;font-weight:normal;font-style:normal;fill:#a0a0a0;stroke:#a0a0a0;stroke-width:0.22px;white-space:pre" >0.0</text>
<text x="958.4" y="154" textLength="14.4" lengthAdjust="spacingAndGlyphs" style="font-family:'Liberation Sans';font-size:12.5px;font-weight:normal;font-style:normal;fill:#a0a0a0;stroke:#a0a0a0;stroke-width:0.22px;white-space:pre" >0.0</text>
<text x="958.4" y="176" textLength="14.4" lengthAdjust="spacingAndGlyphs" style="font-family:'Liberation Sans';font-size:12.5px;font-weight:normal;font-style:normal;fill:#a0a0a0;stroke:#a0a0a0;stroke-width:0.22px;white-space:pre" >0.0</text>
<text x="1009.9" y="128" textLength="61.5" lengthAdjust="spacingAndGlyphs" style="font-family:'Liberation Sans';font-size:12px;font-weight:normal;font-style:normal;fill:#a8a8a8;stroke:#a8a8a8;stroke-width:0.22px;white-space:pre" >Shape model</text>
<text x="995.8" y="155" textLength="101.9" lengthAdjust="spacingAndGlyphs" style="font-family:'Liberation Sans';font-size:11.5px;font-weight:normal;font-style:normal;fill:#000;stroke:#000;stroke-width:0.22px;white-space:pre" >a/b: 1.00, dMag: 0.00</text>
<text x="1000.3" y="180.4" textLength="82.7" lengthAdjust="spacingAndGlyphs" style="font-family:'Liberation Sans';font-size:11.5px;font-weight:normal;font-style:normal;fill:#000;stroke:#000;stroke-width:0.22px;white-space:pre" >Motion: 4.60 km/s</text>
<path d="M775.5,198.5 L778.2,201.6 L783.6,195.2" fill="none" stroke="#333" stroke-width="1.3"/>
<text x="791.4" y="203" textLength="35.1" lengthAdjust="spacingAndGlyphs" style="font-family:'Liberation Sans';font-size:12px;font-weight:normal;font-style:normal;fill:#000;stroke:#000;stroke-width:0.22px;white-space:pre" >Circular</text>
<path d="M845.5,198.5 L848.2,201.6 L853.6,195.2" fill="none" stroke="#333" stroke-width="1.3"/>
<text x="862.4" y="196.2" textLength="62" lengthAdjust="spacingAndGlyphs" style="font-family:'Liberation Sans';font-size:12px;font-weight:normal;font-style:normal;fill:#000;stroke:#000;stroke-width:0.22px;white-space:pre" >Use assumed</text>
<text x="862.4" y="209" textLength="39" lengthAdjust="spacingAndGlyphs" style="font-family:'Liberation Sans';font-size:12px;font-weight:normal;font-style:normal;fill:#000;stroke:#000;stroke-width:0.22px;white-space:pre" >diameter</text>
<path d="M943.5,198.5 L946.2,201.6 L951.6,195.2" fill="none" stroke="#333" stroke-width="1.3"/>
<text x="960.4" y="203" textLength="92.9" lengthAdjust="spacingAndGlyphs" style="font-family:'Liberation Sans';font-size:12px;font-weight:normal;font-style:normal;fill:#000;stroke:#000;stroke-width:0.22px;white-space:pre" >Include Miss events</text>
<text x="779.5" y="233.2" textLength="111.2" lengthAdjust="spacingAndGlyphs" style="font-family:'Liberation Sans';font-size:12px;font-weight:bold;font-style:normal;fill:#a6a6a6;stroke:#a6a6a6;stroke-width:0.22px;white-space:pre" >Double stars - show</text>
<circle cx="911.4" cy="229.8" r="6.2" fill="#ffffff" stroke="#bcbcbc" stroke-width="1"/>
<circle cx="911.4" cy="229.8" r="3.3" fill="#bcbcbc"/>
<text x="922.8" y="234" textLength="18.9" lengthAdjust="spacingAndGlyphs" style="font-family:'Liberation Sans';font-size:10.5px;font-weight:normal;font-style:normal;fill:#a0a0a0;stroke:#a0a0a0;stroke-width:0.22px;white-space:pre" >Both</text>
<circle cx="963.5" cy="229.8" r="6.2" fill="#ffffff" stroke="#bcbcbc" stroke-width="1"/>
<text x="975" y="234" textLength="31.5" lengthAdjust="spacingAndGlyphs" style="font-family:'Liberation Sans';font-size:10.5px;font-weight:normal;font-style:normal;fill:#a0a0a0;stroke:#a0a0a0;stroke-width:0.22px;white-space:pre" >Primary</text>
<circle cx="1028.5" cy="229.8" r="6.2" fill="#ffffff" stroke="#bcbcbc" stroke-width="1"/>
<text x="1040" y="234" textLength="43.2" lengthAdjust="spacingAndGlyphs" style="font-family:'Liberation Sans';font-size:10.5px;font-weight:normal;font-style:normal;fill:#a0a0a0;stroke:#a0a0a0;stroke-width:0.22px;white-space:pre" >Secondary</text>
<text x="772" y="259.5" textLength="90.2" lengthAdjust="spacingAndGlyphs" style="font-family:'Liberation Sans';font-size:12px;font-weight:bold;font-style:normal;fill:#006400;stroke:#006400;stroke-width:0.22px;white-space:pre" >Quality of the fit</text>
<text x="875.5" y="258.6" textLength="146.3" lengthAdjust="spacingAndGlyphs" style="font-family:'Liberation Sans';font-size:12px;font-weight:normal;font-style:normal;fill:#000;stroke:#000;stroke-width:0.22px;white-space:pre" >Astrometry only. No reliable size</text>
<path d="M1072.5,253.5 L1077,258 L1081.5,253.5" fill="none" stroke="#333" stroke-width="1.1"/>
<text x="892.3" y="280.1" textLength="98.2" lengthAdjust="spacingAndGlyphs" style="font-family:'Liberation Sans';font-size:12px;font-weight:normal;font-style:italic;fill:#000;stroke:#000;stroke-width:0.22px;white-space:pre" >Flag for future review</text>
<text x="770.2" y="315.4" textLength="8.3" lengthAdjust="spacingAndGlyphs" style="font-family:'Liberation Sans';font-size:12px;font-weight:bold;font-style:normal;fill:#6a0032;stroke:#6a0032;stroke-width:0.22px;white-space:pre" >P</text>
<text x="770.2" y="328" textLength="7.3" lengthAdjust="spacingAndGlyphs" style="font-family:'Liberation Sans';font-size:12px;font-weight:bold;font-style:normal;fill:#6a0032;stroke:#6a0032;stroke-width:0.22px;white-space:pre" >L</text>
<text x="769.8" y="341.7" textLength="9.5" lengthAdjust="spacingAndGlyphs" style="font-family:'Liberation Sans';font-size:12px;font-weight:bold;font-style:normal;fill:#6a0032;stroke:#6a0032;stroke-width:0.22px;white-space:pre" >O</text>
<text x="770.2" y="355" textLength="8" lengthAdjust="spacingAndGlyphs" style="font-family:'Liberation Sans';font-size:12px;font-weight:bold;font-style:normal;fill:#6a0032;stroke:#6a0032;stroke-width:0.22px;white-space:pre" >T</text>
<text x="791" y="312.2" textLength="30.8" lengthAdjust="spacingAndGlyphs" style="font-family:'Liberation Sans';font-size:12.5px;font-weight:bold;font-style:normal;fill:#6a0032;stroke:#6a0032;stroke-width:0.22px;white-space:pre" >Scale</text>
<path d="M960,301.2 H966.2 V308.5 L963.1,311 L960,308.5 Z" fill="#0078d7"/>
<text x="791" y="338.5" textLength="22.3" lengthAdjust="spacingAndGlyphs" style="font-family:'Liberation Sans';font-size:12.5px;font-weight:bold;font-style:normal;fill:#6a0032;stroke:#6a0032;stroke-width:0.22px;white-space:pre" >Size</text>
<circle cx="836.5" cy="334.7" r="6.2" fill="#ffffff" stroke="#333333" stroke-width="1"/>
<circle cx="836.5" cy="334.7" r="3.3" fill="#333333"/>
<text x="849" y="339" textLength="36.2" lengthAdjust="spacingAndGlyphs" style="font-family:'Liberation Sans';font-size:12px;font-weight:bold;font-style:normal;fill:#6a0032;stroke:#6a0032;stroke-width:0.22px;white-space:pre" >normal</text>
<circle cx="900.4" cy="334.7" r="6.2" fill="#ffffff" stroke="#333333" stroke-width="1"/>
<text x="912.8" y="339" textLength="17.2" lengthAdjust="spacingAndGlyphs" style="font-family:'Liberation Sans';font-size:12px;font-weight:bold;font-style:normal;fill:#6a0032;stroke:#6a0032;stroke-width:0.22px;white-space:pre" >x 2</text>
<circle cx="944.6" cy="334.7" r="6.2" fill="#ffffff" stroke="#333333" stroke-width="1"/>
<text x="956.7" y="339" textLength="17.5" lengthAdjust="spacingAndGlyphs" style="font-family:'Liberation Sans';font-size:12px;font-weight:bold;font-style:normal;fill:#6a0032;stroke:#6a0032;stroke-width:0.22px;white-space:pre" >x 5</text>
<text x="1005.6" y="340.4" textLength="71.2" lengthAdjust="spacingAndGlyphs" style="font-family:'Liberation Sans';font-size:12px;font-weight:bold;font-style:normal;fill:#800080;stroke:#800080;stroke-width:0.22px;white-space:pre" >Form opacity</text>
<path d="M1084.2,348.3 H1092 V357.5 L1088.1,360.5 L1084.2,357.5 Z" fill="#0078d7"/>
<text x="791.7" y="363.8" textLength="102.6" lengthAdjust="spacingAndGlyphs" style="font-family:'Liberation Sans';font-size:12.5px;font-weight:bold;font-style:normal;fill:#6a0032;stroke:#6a0032;stroke-width:0.22px;white-space:pre" >Scroll range x1.25</text>
<text x="775.8" y="393.2" textLength="96.6" lengthAdjust="spacingAndGlyphs" style="font-family:'Liberation Sans';font-size:11.5px;font-weight:normal;font-style:normal;fill:#000;stroke:#000;stroke-width:0.22px;white-space:pre" >RMS fit -0.1 ±0.0 km</text>
<path d="M780,756 L776.5,759.6 L780,763.2" fill="none" stroke="#606060" stroke-width="2"/>
<path d="M1084,756 L1087.5,759.6 L1084,763.2" fill="none" stroke="#606060" stroke-width="2"/>
<circle cx="777.4" cy="435.6" r="1.3" fill="none" stroke="#ff69b4" stroke-width="1"/>
<circle cx="792.5" cy="435.6" r="1.3" fill="none" stroke="#ff69b4" stroke-width="1"/>
<circle cx="807.4" cy="435.6" r="1.3" fill="none" stroke="#ff69b4" stroke-width="1"/>
<circle cx="822.4" cy="435.6" r="1.3" fill="none" stroke="#ff69b4" stroke-width="1"/>
<circle cx="837.6" cy="435.6" r="1.3" fill="none" stroke="#ff69b4" stroke-width="1"/>
<svg x="770" y="404" width="324" height="348" overflow="hidden">
<text x="94.10000000000002" y="12.300000000000011" style="font-family:'Liberation Mono';font-size:13.77px;font-weight:normal;font-style:normal;fill:#333;white-space:pre" >1(M) D Gault, near Hawkesbury</text>
<text x="94.10000000000002" y="24.19999999999999" style="font-family:'Liberation Mono';font-size:13.77px;font-weight:normal;font-style:normal;fill:#333;white-space:pre" >2    P Nosworthy, near Hazelbrook</text>
<text x="94.10000000000002" y="36.19999999999999" style="font-family:'Liberation Mono';font-size:13.77px;font-weight:normal;font-style:normal;fill:#333;white-space:pre" >3(P) Predicted</text>
</svg>
</svg>
</body></html>
